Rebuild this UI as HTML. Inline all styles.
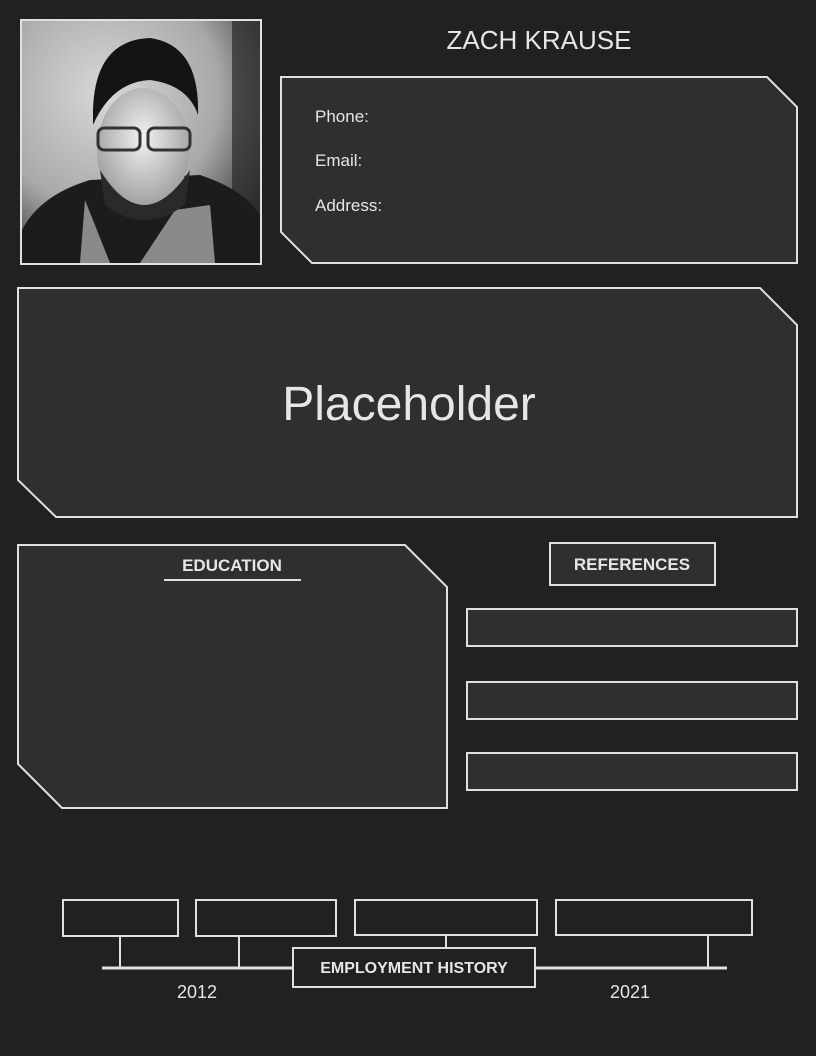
<!DOCTYPE html>
<html><head><meta charset="utf-8"><style>
html,body{margin:0;padding:0;background:#212121;}
svg{display:block}
text{font-family:"Liberation Sans",sans-serif;fill:#e6e6e6}
</style></head><body>
<svg width="816" height="1056" viewBox="0 0 816 1056" xmlns="http://www.w3.org/2000/svg">
<defs>
<radialGradient id="bg" cx="0.35" cy="0.3" r="0.8">
<stop offset="0" stop-color="#d8d8d8"/><stop offset="0.6" stop-color="#a8a8a8"/><stop offset="1" stop-color="#303030"/>
</radialGradient>
<radialGradient id="face" cx="0.5" cy="0.4" r="0.6">
<stop offset="0" stop-color="#f2f2f2"/><stop offset="1" stop-color="#9a9a9a"/>
</radialGradient>
</defs>
<rect width="816" height="1056" fill="#212121"/>
<rect x="22" y="21" width="238" height="242" fill="url(#bg)"/>
<rect x="232" y="21" width="28" height="242" fill="#2a2a2a" opacity="0.7"/>
<path d="M22 230 Q40 195 90 180 L200 175 Q245 190 260 215 L260 263 L22 263Z" fill="#1c1c1c"/>
<path d="M85 200 L110 263 L140 263 L175 210 L210 205 L215 263 L80 263 Z" fill="#8a8a8a"/>
<ellipse cx="143" cy="150" rx="46" ry="62" fill="url(#face)"/>
<path d="M93 110 Q95 40 150 38 Q200 45 198 115 Q188 85 150 80 Q112 82 93 125Z" fill="#141414"/>
<path d="M100 170 Q143 240 190 170 L185 205 Q143 235 105 205Z" fill="#2a2a2a"/>
<rect x="98" y="128" width="42" height="22" rx="6" fill="none" stroke="#333" stroke-width="3"/>
<rect x="148" y="128" width="42" height="22" rx="6" fill="none" stroke="#333" stroke-width="3"/>
<rect x="21" y="20" width="240" height="244" fill="none" stroke="#e0e0e0" stroke-width="2"/>
<text x="539" y="49" font-size="26" text-anchor="middle">ZACH KRAUSE</text>
<polygon points="281,77 767,77 797,107 797,263 312,263 281,232" fill="#2f2f2f" stroke="#e0e0e0" stroke-width="2"/>
<text x="315" y="122" font-size="17">Phone:</text>
<text x="315" y="166" font-size="17">Email:</text>
<text x="315" y="211" font-size="17">Address:</text>
<polygon points="18,288 760,288 797,325 797,517 56,517 18,480" fill="#2f2f2f" stroke="#e0e0e0" stroke-width="2"/>
<text x="409" y="420" font-size="48" text-anchor="middle">Placeholder</text>
<polygon points="18,545 405,545 447,587 447,808 62,808 18,764" fill="#2f2f2f" stroke="#e0e0e0" stroke-width="2"/>
<text x="232" y="571" font-size="17" font-weight="bold" text-anchor="middle">EDUCATION</text>
<line x1="164" y1="580" x2="301" y2="580" stroke="#e0e0e0" stroke-width="2"/>
<rect x="550" y="543" width="165" height="42" fill="#2f2f2f" stroke="#e0e0e0" stroke-width="2"/>
<text x="632" y="570" font-size="17" font-weight="bold" text-anchor="middle">REFERENCES</text>
<rect x="467" y="609" width="330" height="37" fill="#2f2f2f" stroke="#e0e0e0" stroke-width="2"/>
<rect x="467" y="682" width="330" height="37" fill="#2f2f2f" stroke="#e0e0e0" stroke-width="2"/>
<rect x="467" y="753" width="330" height="37" fill="#2f2f2f" stroke="#e0e0e0" stroke-width="2"/>
<g fill="none" stroke="#e0e0e0" stroke-width="2">
<rect x="63" y="900" width="115" height="36"/>
<rect x="196" y="900" width="140" height="36"/>
<rect x="355" y="900" width="182" height="35"/>
<rect x="556" y="900" width="196" height="35"/>
<line x1="120" y1="936" x2="120" y2="968"/>
<line x1="239" y1="936" x2="239" y2="968"/>
<line x1="446" y1="935" x2="446" y2="948"/>
<line x1="708" y1="935" x2="708" y2="968"/>
</g>
<line x1="102" y1="968" x2="727" y2="968" stroke="#e0e0e0" stroke-width="3"/>
<rect x="293" y="948" width="242" height="39" fill="#212121" stroke="#e0e0e0" stroke-width="2"/>
<text x="414" y="973" font-size="16" font-weight="bold" text-anchor="middle">EMPLOYMENT HISTORY</text>
<text x="197" y="998" font-size="18" text-anchor="middle">2012</text>
<text x="630" y="998" font-size="18" text-anchor="middle">2021</text>
</svg>
</body></html>
